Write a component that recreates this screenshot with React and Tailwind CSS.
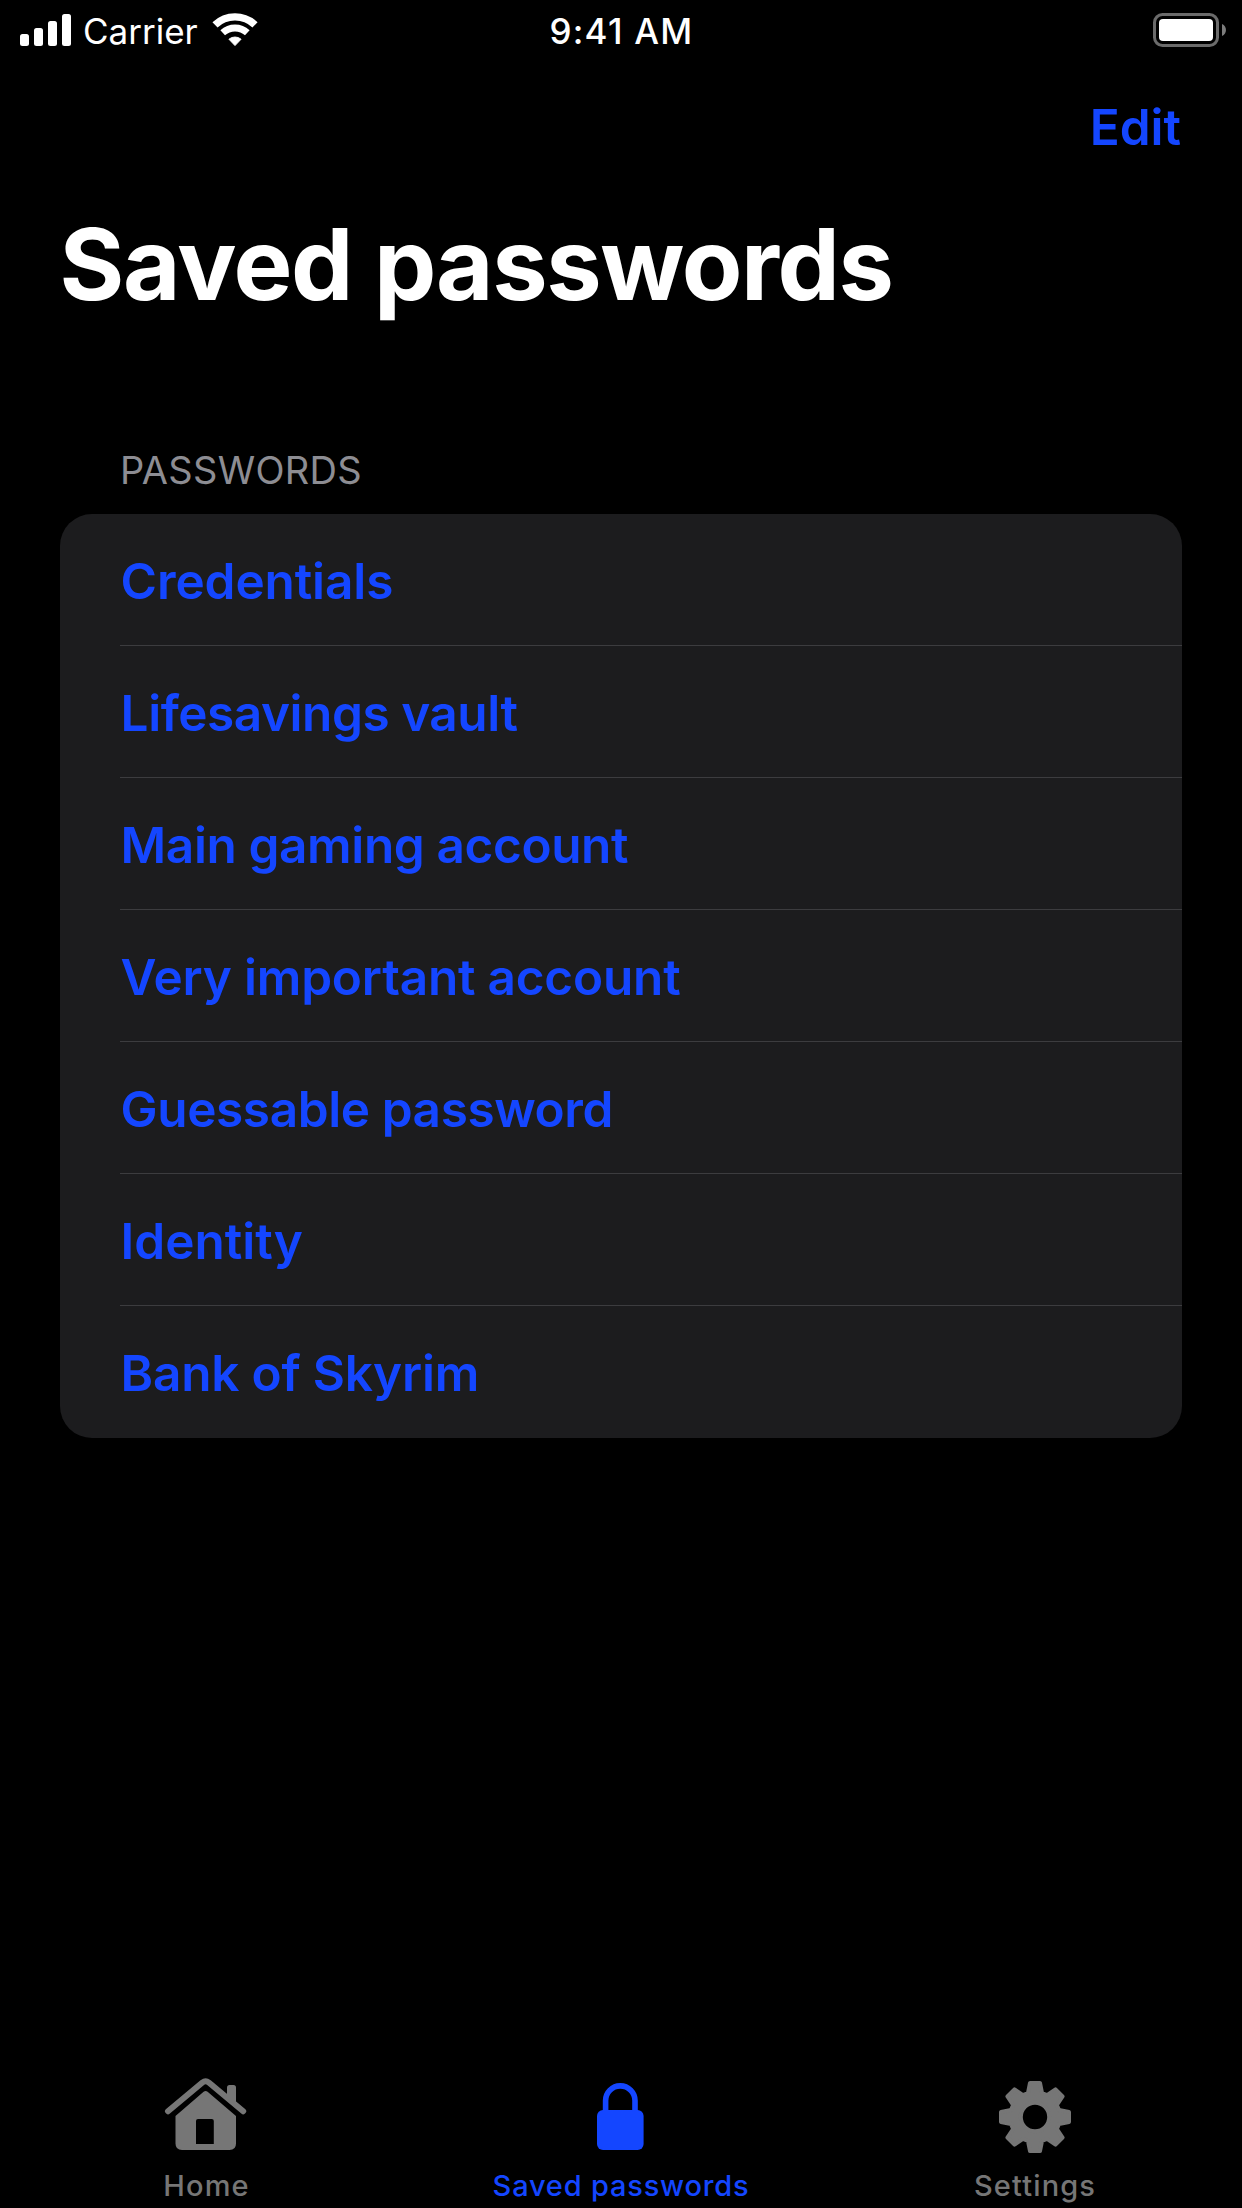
const passwords = [
  { name: 'Credentials', spacing: 'tracking-[-0.1px]' },
  { name: 'Lifesavings vault', spacing: 'tracking-[-0.45px]' },
  { name: 'Main gaming account', spacing: 'tracking-[-0.38px]' },
  { name: 'Very important account', spacing: 'tracking-[-0.2px]' },
  { name: 'Guessable password', spacing: 'tracking-[-0.4px]' },
  { name: 'Identity', spacing: 'tracking-[0px]' },
  { name: 'Bank of Skyrim', spacing: 'tracking-[-0.2px]' },
];

function SignalIcon() {
  return (
    <svg className="h-8 w-[51px]" viewBox="0 0 51 32" fill="currentColor">
      <rect x="0" y="20" width="9" height="12" rx="2.5" />
      <rect x="14" y="14" width="9" height="18" rx="2.5" />
      <rect x="28" y="7" width="9" height="25" rx="2.5" />
      <rect x="42" y="0" width="9" height="32" rx="2.5" />
    </svg>
  );
}

function WifiIcon() {
  return (
    <svg className="h-[34px] w-[46px]" viewBox="0 0 46 34" fill="none" stroke="currentColor">
      <path d="M3 11.9 A29 29 0 0 1 43 11.9" strokeWidth="7.4" />
      <path d="M10.7 19.8 A18.1 18.1 0 0 1 35.3 19.8" strokeWidth="6.8" />
      <path d="M23 32.6 L16.9 26.2 A9.6 9.6 0 0 1 29.1 26.2 Z" fill="currentColor" strokeWidth="0.9" strokeLinejoin="round" />
    </svg>
  );
}

function BatteryIcon() {
  return (
    <svg className="h-[34px] w-[73px]" viewBox="0 0 73 34">
      <rect x="1.5" y="1.5" width="63" height="31" rx="8" fill="none" stroke="#6b6b6b" strokeWidth="3" />
      <rect x="6" y="6" width="54" height="22" rx="4" fill="#fff" />
      <path d="M69 11 C74.3 13 74.3 21 69 23 Z" fill="#7c7c7c" />
    </svg>
  );
}

function HomeIcon() {
  return (
    <svg className="size-[76px] overflow-visible" viewBox="0 0 76 76" fill="currentColor">
      <path d="M-1 33.2 L33.4 4.5 Q36.6 2 39.8 4.5 L74.2 33.2" fill="none" stroke="currentColor" strokeWidth="6" strokeLinecap="round" strokeLinejoin="round" />
      <path d="M58 21 V9.5 Q58 7 60.5 7 H64.5 Q67 7 67 9.5 V28 Z" />
      <path
        fillRule="evenodd"
        d="M6.5 38 L34.6 13.8 Q36.6 12.2 38.6 13.8 L67 38 V65.5 Q67 72 60.5 72 H13 Q6.5 72 6.5 65.5 Z M27 43 V66 H44.8 V43 Q44.8 41 42.8 41 H29 Q27 41 27 43 Z"
      />
    </svg>
  );
}

function LockIcon() {
  return (
    <svg className="size-[76px]" viewBox="0 0 76 76" fill="currentColor">
      <rect x="14" y="32" width="46.6" height="40" rx="6" />
      <path d="M22.6 34 V22.6 a14.7 14.7 0 0 1 29.4 0 V34" fill="none" stroke="currentColor" strokeWidth="5.6" />
    </svg>
  );
}

const toothAngles = [0, 45, 90, 135, 180, 225, 270, 315];

function gearOutline() {
  const profile = [[-7, -24], [-5, -34], [5, -34], [7, -24]];
  const points = toothAngles.flatMap((deg) => {
    const a = (deg * Math.PI) / 180;
    return profile.map(([x, y]) => `${(x * Math.cos(a) - y * Math.sin(a)).toFixed(2)} ${(x * Math.sin(a) + y * Math.cos(a)).toFixed(2)}`);
  });
  return `M${points.join('L')}Z`;
}

function GearIcon() {
  return (
    <svg className="size-[76px]" viewBox="-38 -39 76 76" fill="currentColor">
      <path
        fillRule="evenodd"
        stroke="currentColor"
        strokeWidth="4"
        strokeLinejoin="round"
        d={`${gearOutline()}M14.2 0A14.2 14.2 0 1 0 -14.2 0A14.2 14.2 0 1 0 14.2 0Z`}
      />
    </svg>
  );
}

const tabs = [
  { label: 'Home', Icon: HomeIcon, color: 'text-[#767676]', spacing: 'tracking-[1.1px] pr-[1px]' },
  { label: 'Saved passwords', Icon: LockIcon, color: 'text-[#1446ff]', spacing: 'tracking-[0.8px]' },
  { label: 'Settings', Icon: GearIcon, color: 'text-[#767676]', spacing: 'tracking-[1.15px]' },
];

export default function App() {
  return (
    <div className="flex h-[2208px] w-[1242px] flex-col overflow-hidden bg-black font-['Inter',sans-serif] text-white">
      <div className="grid h-[60px] grid-cols-3 items-center pr-4 pl-5">
        <div className="flex items-center">
          <SignalIcon />
          <span className="ml-3 pt-0.5 text-[35px] leading-[44px]">Carrier</span>
          <span className="ml-[14px]">
            <WifiIcon />
          </span>
        </div>
        <span className="pt-0.5 pr-[3px] text-center text-[35px] leading-[44px] font-medium tracking-[1.25px]">9:41 AM</span>
        <span className="flex justify-end">
          <BatteryIcon />
        </span>
      </div>

      <header>
        <div className="flex h-[134px] items-center justify-end pr-[61px]">
          <button className="text-[49.5px] leading-[60px] font-semibold tracking-[0px] text-[#1446ff]">Edit</button>
        </div>
        <h1 className="pl-[59.5px] text-[99px] leading-[140px] font-bold tracking-[-1.4px]">Saved passwords</h1>
      </header>

      <main className="flex-1 px-[60px] pt-[112px]">
        <h2 className="h-[68px] pl-[60px] text-[38px] leading-[48px] tracking-[0.3px] text-[#8d8d93]">PASSWORDS</h2>
        <ul className="rounded-[32px] bg-[#1c1c1e] pl-[60px]">
          {passwords.map(({ name, spacing }) => (
            <li
              key={name}
              className="flex h-[132px] items-center border-b border-[#3c3c3f] pt-[3px] pl-[0.6px] last:border-transparent"
            >
              <span className={`text-[49.5px] leading-[60px] font-semibold text-[#1446ff] ${spacing}`}>{name}</span>
            </li>
          ))}
        </ul>
      </main>

      <nav className="grid h-[130px] grid-cols-3">
        {tabs.map(({ label, Icon, color, spacing }) => (
          <div key={label} className={`flex flex-col items-center ${color}`}>
            <Icon />
            <span className={`mt-[10px] text-[29px] leading-[43px] font-medium ${spacing}`}>{label}</span>
          </div>
        ))}
      </nav>
    </div>
  );
}
